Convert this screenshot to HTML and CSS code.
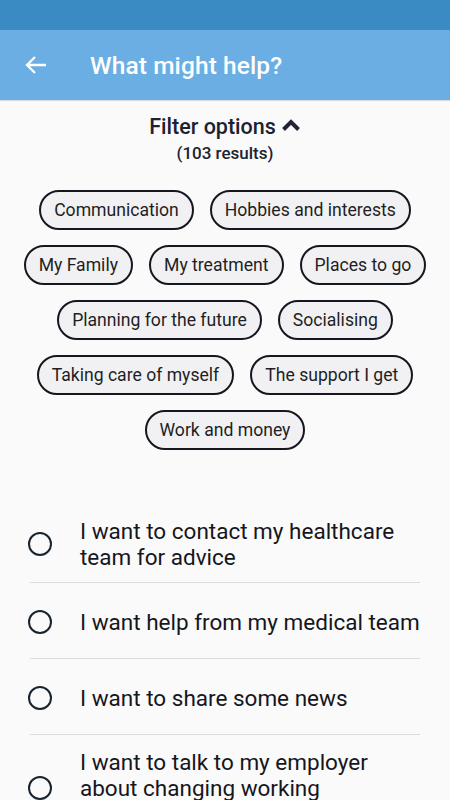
FILE: index.html
```html
<!DOCTYPE html>
<html>
<head>
<meta charset="utf-8">
<link rel="stylesheet" href="styles.css">
</head>
<body>
<div class="status-bar"></div>
<header class="app-bar">
  <svg class="back" width="24" height="20" viewBox="0 0 24 20"><path d="M22 10H3M11 2L3 10l8 8" fill="none" stroke="#fff" stroke-width="2.3" stroke-linecap="butt" stroke-linejoin="miter"/></svg>
  <h1 class="title">What might help?</h1>
</header>
<main class="content">
  <div class="filter-head">
    <div class="filter-title">Filter options
      <svg class="chev" width="20" height="14" viewBox="0 0 20 14"><path d="M2.5 11.5L10 4l7.5 7.5" fill="none" stroke="#232338" stroke-width="4"/></svg>
    </div>
    <div class="results">(103 results)</div>
  </div>
  <div class="chips">
    <span class="chip">Communication</span>
    <span class="chip">Hobbies and interests</span>
    <span class="chip">My Family</span>
    <span class="chip">My treatment</span>
    <span class="chip">Places to go</span>
    <span class="chip">Planning for the future</span>
    <span class="chip">Socialising</span>
    <span class="chip">Taking care of myself</span>
    <span class="chip">The support I get</span>
    <span class="chip">Work and money</span>
  </div>
  <ul class="list">
    <li class="item"><span class="radio"></span><span class="label">I want to contact my healthcare team for advice</span></li>
    <li class="item"><span class="radio"></span><span class="label">I want help from my medical team</span></li>
    <li class="item"><span class="radio"></span><span class="label">I want to share some news</span></li>
    <li class="item"><span class="radio"></span><span class="label">I want to talk to my employer about changing working arrangements</span></li>
  </ul>
</main>
</body>
</html>
```
FILE: styles.css
```css
html, body {
  margin: 0;
  padding: 0;
}
body {
  width: 450px;
  height: 800px;
  overflow: hidden;
  background: #fafafa;
  font-family: Roboto, "Noto Sans", sans-serif;
  color: #1c1c24;
}
.status-bar {
  height: 30px;
  background: #3a8ac3;
}
.app-bar {
  height: 70px;
  background: #6aaee3;
  display: flex;
  align-items: center;
  box-shadow: 0 1px 1px rgba(0,0,0,0.12);
}
.back {
  margin-left: 24px;
  flex: none;
}
.title {
  margin: 0 0 0 42px;
  font-size: 24.5px;
  font-weight: 500;
  color: #fff;
  letter-spacing: 0.1px;
}
.filter-head {
  padding-top: 12px;
  text-align: center;
}
.filter-title {
  font-size: 21.5px;
  line-height: 29px;
  font-weight: 500;
  color: #1b2330;
  display: flex;
  justify-content: center;
  align-items: center;
  gap: 5px;
}
.chev {
  margin-top: -4px;
}
.results {
  font-size: 17px;
  line-height: 24px;
  font-weight: 500;
  color: #1b2330;
}
.chips {
  margin-top: 25px;
  padding: 0 20px;
  display: flex;
  flex-wrap: wrap;
  justify-content: center;
  gap: 15px 16px;
}
.chip {
  box-sizing: border-box;
  height: 40px;
  display: flex;
  align-items: center;
  padding: 0 13px;
  border: 2px solid #16161f;
  border-radius: 20px;
  background: #f1f1f3;
  font-size: 17.6px;
  color: #1e1e24;
}
.list {
  list-style: none;
  margin: 54px 30px 0 30px;
  padding: 0;
}
.item {
  box-sizing: border-box;
  min-height: 76px;
  padding: 14px 0 12px;
  display: flex;
  align-items: center;
  border-bottom: 1px solid #dddddd;
}
.radio {
  flex: none;
  box-sizing: border-box;
  width: 24px;
  height: 24px;
  margin-left: -2px;
  border: 2.5px solid #17232f;
  border-radius: 50%;
}
.label {
  margin-left: 28px;
  font-size: 22.5px;
  line-height: 26px;
  color: #16161c;
}
```
